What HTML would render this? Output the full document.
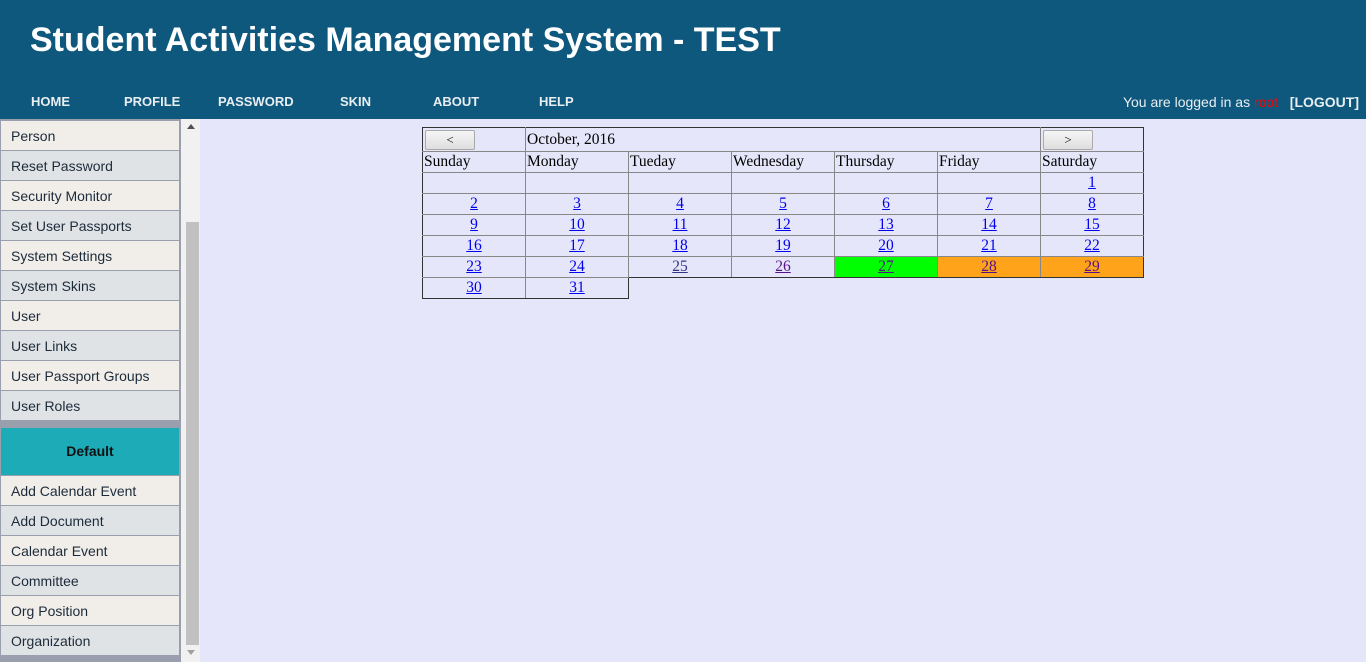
<!DOCTYPE html><html><head><style>
*{margin:0;padding:0;box-sizing:border-box}
body{width:1366px;height:662px;overflow:hidden;background:#e6e6fa;font-family:"Liberation Sans",sans-serif;position:relative}
.hdr{position:absolute;left:0;top:0;width:1366px;height:119px;background:#0f587d}
.title{position:absolute;left:30px;top:21px;color:#fff;font-size:34px;font-weight:bold;white-space:nowrap}
.nav{position:absolute;top:94px;color:#e8eef2;font-size:13px;font-weight:bold;white-space:nowrap}
.sb{position:absolute;left:0;top:119px;width:181px;height:543px;background:#9a9fae}
.it{position:absolute;left:1px;width:178px;height:29px;font-size:14px;color:#1c2b3a;padding-left:10px;line-height:30px}
.a{background:#f1eeea}.b{background:#e0e3e6}
.def{position:absolute;left:1px;top:428px;width:178px;height:47px;background:#1eabb8;text-align:center;line-height:47px;font-size:14px;font-weight:bold;color:#111}
.scr{position:absolute;left:181px;top:119px;width:19px;height:543px;background:#f1f1f1}
.th{position:absolute;left:186px;top:222px;width:13px;height:423px;background:#c1c1c1}
table{position:absolute;left:422px;top:127px;border-collapse:collapse;font-family:"Liberation Serif",serif;font-size:15.5px}
td{border:1px solid #888;width:103px;height:21px;padding:0 1px;text-align:center;color:#000}
td.l{text-align:left}
tr.t td{border-top:1px solid #333}
td.f{border-left:1px solid #333}
td.r{border-right:1px solid #333}
a{color:#00e;text-decoration:underline}
.btn{width:50px;height:20px;border:1px solid #aaa;border-radius:2px;background:linear-gradient(#f6f6f6,#dedede);font-size:13px;text-align:center;line-height:18px;margin-left:1px}
</style></head><body>
<div class="hdr">
<div class="title">Student Activities Management System - TEST</div>
<div class="nav" style="left:31px">HOME</div>
<div class="nav" style="left:124px">PROFILE</div>
<div class="nav" style="left:218px">PASSWORD</div>
<div class="nav" style="left:340px">SKIN</div>
<div class="nav" style="left:433px">ABOUT</div>
<div class="nav" style="left:539px">HELP</div>
<div class="nav" style="left:auto;right:7px;font-weight:normal;font-size:14px">You are logged in as <span style="color:#f00">root</span> &nbsp;&nbsp;<b>[LOGOUT]</b></div>
</div>
<div class="sb">
<div class="it a" style="top:2px">Person</div>
<div class="it b" style="top:32px">Reset Password</div>
<div class="it a" style="top:62px">Security Monitor</div>
<div class="it b" style="top:92px">Set User Passports</div>
<div class="it a" style="top:122px">System Settings</div>
<div class="it b" style="top:152px">System Skins</div>
<div class="it a" style="top:182px">User</div>
<div class="it b" style="top:212px">User Links</div>
<div class="it a" style="top:242px">User Passport Groups</div>
<div class="it b" style="top:272px">User Roles</div>
<div class="it a" style="top:357px">Add Calendar Event</div>
<div class="it b" style="top:387px">Add Document</div>
<div class="it a" style="top:417px">Calendar Event</div>
<div class="it b" style="top:447px">Committee</div>
<div class="it a" style="top:477px">Org Position</div>
<div class="it b" style="top:507px">Organization</div>
</div>
<div class="def">Default</div>
<div class="scr"></div><div class="th"></div>
<div style="position:absolute;left:187px;top:124px;border:4px solid transparent;border-bottom:5px solid #505050;border-top:0"></div>
<div style="position:absolute;left:187px;top:650px;border:4px solid transparent;border-top:5px solid #a0a0a0;border-bottom:0"></div>
<table>
<tr class="t" style="height:24px"><td class="l f"><div class="btn">&lt;</div></td><td class="l" colspan="5">October, 2016</td><td class="l r"><div class="btn">&gt;</div></td></tr>
<tr><td class="l f">Sunday</td><td class="l">Monday</td><td class="l">Tueday</td><td class="l">Wednesday</td><td class="l">Thursday</td><td class="l">Friday</td><td class="l r">Saturday</td></tr>
<tr><td class="f"></td><td></td><td></td><td></td><td></td><td></td><td class="r"><a>1</a></td></tr>
<tr><td class="f"><a>2</a></td><td><a>3</a></td><td><a>4</a></td><td><a>5</a></td><td><a>6</a></td><td><a>7</a></td><td class="r"><a>8</a></td></tr>
<tr><td class="f"><a>9</a></td><td><a>10</a></td><td><a>11</a></td><td><a>12</a></td><td><a>13</a></td><td><a>14</a></td><td class="r"><a>15</a></td></tr>
<tr><td class="f"><a>16</a></td><td><a>17</a></td><td><a>18</a></td><td><a>19</a></td><td><a>20</a></td><td><a>21</a></td><td class="r"><a>22</a></td></tr>
<tr><td class="f"><a>23</a></td><td><a>24</a></td><td style="border-bottom:1px solid #333"><a style="color:#338">25</a></td><td style="border-bottom:1px solid #333"><a style="color:#518">26</a></td><td style="background:#0f0;border-bottom:1px solid #333"><a style="color:#518">27</a></td><td style="background:#ffa31a;border-bottom:1px solid #333"><a style="color:#518">28</a></td><td class="r" style="background:#ffa31a;border-bottom:1px solid #333"><a style="color:#518">29</a></td></tr>
<tr><td class="f" style="border-bottom:1px solid #333"><a>30</a></td><td style="border-bottom:1px solid #333;border-right:1px solid #333"><a>31</a></td><td style="border:none"></td><td style="border:none"></td><td style="border:none"></td><td style="border:none"></td><td style="border:none"></td></tr>
</table>
</body></html>
